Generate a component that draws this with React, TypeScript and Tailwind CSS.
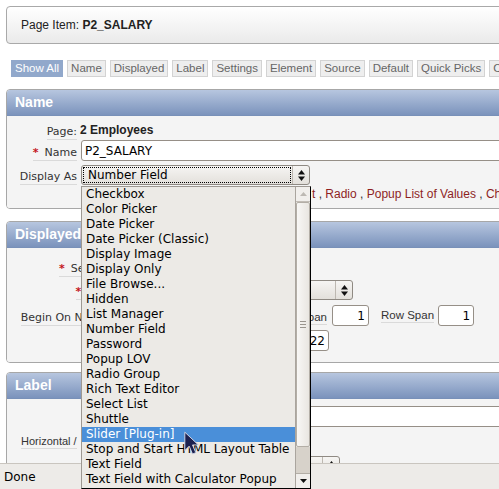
import React from "react";

const displayTypes = [
  "Checkbox",
  "Color Picker",
  "Date Picker",
  "Date Picker (Classic)",
  "Display Image",
  "Display Only",
  "File Browse...",
  "Hidden",
  "List Manager",
  "Number Field",
  "Password",
  "Popup LOV",
  "Radio Group",
  "Rich Text Editor",
  "Select List",
  "Shuttle",
  "Slider [Plug-in]",
  "Stop and Start HTML Layout Table",
  "Text Field",
  "Text Field with Calculator Popup",
];

const tabs = [
  "Show All",
  "Name",
  "Displayed",
  "Label",
  "Settings",
  "Element",
  "Source",
  "Default",
  "Quick Picks",
  "Conditions",
];

function FieldLabel({
  children,
  required,
}: {
  children: React.ReactNode;
  required?: boolean;
}) {
  return (
    <span className="inline-block whitespace-nowrap border-b border-[#dadada] pb-[1px] font-['DejaVu_Sans',sans-serif] text-[11px] leading-[13px] text-[#333]">
      {required && (
        <span className="mr-[6px] font-bold text-[#c4161c]">*</span>
      )}
      {children}
    </span>
  );
}

function UpDown() {
  return (
    <svg width="7" height="13" viewBox="0 0 7 13">
      <path d="M0 5.5 L3.5 1 L7 5.5 Z" fill="#111" />
      <path d="M0 7.5 L3.5 12 L7 7.5 Z" fill="#111" />
    </svg>
  );
}

function SelectBox({
  value,
  focused,
  className,
}: {
  value?: string;
  focused?: boolean;
  className: string;
}) {
  return (
    <div
      className={`flex h-[20px] items-stretch rounded-[3px] border border-[#8f8a83] bg-gradient-to-b from-[#f6f5f3] to-[#e3e0db] ${className}`}
    >
      <div
        className={`m-[1px] flex flex-1 items-center overflow-hidden whitespace-nowrap pl-[4px] font-['DejaVu_Sans',sans-serif] text-[12px] text-black ${
          focused ? "border border-dotted border-black" : ""
        }`}
      >
        {value}
      </div>
      <div className="flex w-[17px] items-center justify-center border-l border-[#bdb8b1]">
        <UpDown />
      </div>
    </div>
  );
}

function TextBox({
  value,
  className,
}: {
  value?: string;
  className: string;
}) {
  return (
    <div
      className={`flex h-[21px] items-center rounded-[3px] border border-[#968f87] bg-white px-[3px] font-['DejaVu_Sans',sans-serif] text-[12px] text-black ${className}`}
    >
      {value}
    </div>
  );
}

function Panel({
  title,
  children,
  className,
}: {
  title: string;
  children: React.ReactNode;
  className: string;
}) {
  return (
    <section
      className={`overflow-hidden rounded-[4px] border border-[#a7a7a7] ${className}`}
    >
      <h2 className="flex h-[26px] items-center border-b border-[#7890b8] bg-gradient-to-b from-[#b7c6df] to-[#7b93bc] pl-[8px] text-[14px] font-bold text-white">
        {title}
      </h2>
      {children}
    </section>
  );
}

function Scrollbar() {
  return (
    <div className="flex w-[15px] flex-col border-l border-[#aaa59e]">
      <div className="flex h-[15px] items-center justify-center border-b border-[#c2bdb6] bg-[#f1efec]">
        <svg width="7" height="4" viewBox="0 0 7 4">
          <path d="M0 4 L3.5 0 L7 4 Z" fill="#bdb9b3" />
        </svg>
      </div>
      <div className="flex h-[245px] items-center justify-center rounded-[2px] border border-[#b3aea6] bg-gradient-to-r from-[#f8f7f5] to-[#e9e6e1]">
        <div className="flex flex-col gap-[2px]">
          <div className="h-px w-[6px] bg-[#9a958e]" />
          <div className="h-px w-[6px] bg-[#9a958e]" />
          <div className="h-px w-[6px] bg-[#9a958e]" />
        </div>
      </div>
      <div className="flex-1 bg-[#d7d2ca]" />
      <div className="flex h-[15px] items-center justify-center border-t border-[#b3aea6] bg-[#f1efec]">
        <svg width="7" height="4" viewBox="0 0 7 4">
          <path d="M0 0 L3.5 4 L7 0 Z" fill="#111" />
        </svg>
      </div>
    </div>
  );
}

export default function App() {
  return (
    <div className="relative flex h-[489px] w-[499px] flex-col overflow-hidden bg-white font-['Liberation_Sans',Arial,sans-serif]">
      <div className="flex-1 overflow-hidden">
        <div className="w-[540px] pl-[6px] pt-[6px]">
          {/* page item heading */}
          <div className="flex h-[38px] items-center rounded-[4px] border border-[#a9a9a9] bg-gradient-to-b from-white to-[#eaeaea] pl-[14px] text-[12px] text-[#222]">
            Page Item:&nbsp;<b>P2_SALARY</b>
          </div>

          {/* tabs */}
          <div className="mt-[16px] flex gap-[4px] pl-[5px]">
            {tabs.map((t, i) => (
              <span
                key={t}
                className={
                  i === 0
                    ? "flex h-[17px] items-center whitespace-nowrap border border-[#91a8cb] bg-[#91a8cb] px-[3px] text-[11.5px] text-white"
                    : "flex h-[17px] items-center whitespace-nowrap border border-[#d3d3d3] bg-[#eeeeee] px-[3px] text-[11.5px] text-[#666]"
                }
              >
                {t}
              </span>
            ))}
          </div>

          {/* Name */}
          <Panel title="Name" className="mt-[12px]">
            <div className="flex h-[92px] flex-col bg-[#f4f4f4] pt-[6px]">
              <div className="flex h-[16px] items-center">
                <div className="w-[70px] text-right">
                  <FieldLabel>Page:</FieldLabel>
                </div>
                <span className="ml-[3px] text-[12px] font-bold text-[#222]">
                  2 Employees
                </span>
              </div>
              <div className="mt-[2px] flex h-[21px] items-center">
                <div className="w-[70px] text-right">
                  <FieldLabel required>Name</FieldLabel>
                </div>
                <TextBox value="P2_SALARY" className="ml-[4px] w-[430px] text-[11.5px]" />
              </div>
              <div className="mt-[4px] flex h-[20px] items-center">
                <div className="w-[70px] text-right">
                  <FieldLabel>Display As</FieldLabel>
                </div>
                <SelectBox value="Number Field" focused className="ml-[4px] w-[229px]" />
              </div>
              <div className="flex h-[17px] items-center whitespace-nowrap pl-[305px] text-[12px] text-[#333]">
                <span className="text-[#8e1f1f]">t</span>&nbsp;,&nbsp;
                <span className="text-[#8e1f1f]">Radio</span>&nbsp;,&nbsp;
                <span className="text-[#8e1f1f]">Popup List of Values</span>&nbsp;,&nbsp;
                <span className="text-[#8e1f1f]">Checkbox</span>
              </div>
            </div>
          </Panel>

          {/* Displayed */}
          <Panel title="Displayed" className="mt-[12px]">
            <div className="flex h-[114px] flex-col bg-[#f4f4f4] pt-[9px]">
              <div className="flex h-[20px] items-center">
                <div className="w-[118px] text-right">
                  <FieldLabel required>Sequence</FieldLabel>
                </div>
              </div>
              <div className="mt-[3px] flex h-[20px] items-center">
                <div className="w-[118px] text-right">
                  <FieldLabel required>Region</FieldLabel>
                </div>
                <SelectBox className="ml-[4px] w-[224px]" />
              </div>
              <div className="mt-[5px] flex h-[21px] items-center">
                <div className="w-[118px] text-right">
                  <FieldLabel>Begin On New Line</FieldLabel>
                </div>
                <div className="w-[202px] text-right">
                  <span className="inline-block border-b border-[#dadada] text-[11.5px] leading-[14px] text-[#333]">
                    pan
                  </span>
                </div>
                <TextBox value="1" className="ml-[5px] w-[37px] justify-end" />
                <span className="ml-[12px] inline-block border-b border-[#dadada] text-[11.5px] leading-[14px] text-[#333]">
                  Row Span
                </span>
                <TextBox value="1" className="ml-[4px] w-[36px] justify-end" />
              </div>
              <div className="mt-[4px] flex h-[21px] items-center">
                <div className="w-[118px]" />
                <TextBox value="22" className="ml-[164px] w-[40px] justify-end" />
              </div>
            </div>
          </Panel>

          {/* Label */}
          <Panel title="Label" className="mt-[9px]">
            <div className="flex h-[80px] flex-col bg-[#f4f4f4] pt-[7px]">
              <div className="flex h-[21px] items-center">
                <div className="w-[118px]" />
                <TextBox className="ml-[4px] w-[400px]" />
              </div>
              <div className="mt-[4px] flex h-[20px] items-center pl-[14px]">
                <span className="inline-block whitespace-nowrap border-b border-[#dadada] text-[11px] leading-[14px] text-[#333]">
                  Horizontal /
                </span>
              </div>
              <div className="mt-[5px] flex h-[20px] items-center">
                <div className="w-[118px]" />
                <SelectBox className="ml-[4px] w-[211px]" />
              </div>
            </div>
          </Panel>
        </div>
      </div>

      {/* browser status bar */}
      <div className="flex h-[26px] items-center border-t border-[#c9c5bf] bg-[#edebe8] pl-[4px] font-['DejaVu_Sans',sans-serif] text-[12px] text-black">
        Done
      </div>

      {/* open select popup */}
      <div className="absolute left-[81px] top-[186px] flex h-[303px] w-[230px] border-b border-l border-r border-t border-b-black border-l-[#9d9892] border-r-black border-t-[#9d9892] bg-[#eceae6]">
        <ul className="flex-1 font-['DejaVu_Sans',sans-serif] text-[12px]">
          {displayTypes.map((d) => (
            <li
              key={d}
              className={
                d === "Slider [Plug-in]"
                  ? "h-[15px] whitespace-nowrap bg-[#4a8fd9] pl-[4px] leading-[15px] text-white"
                  : "h-[15px] whitespace-nowrap pl-[4px] leading-[15px] text-black"
              }
            >
              {d}
            </li>
          ))}
        </ul>
        <Scrollbar />
      </div>

      {/* mouse pointer */}
      <svg
        className="absolute left-[183px] top-[431px]"
        width="19"
        height="26"
        viewBox="0 0 16 22"
      >
        <path
          d="M1.5 1 L1.5 16.5 L5.2 12.8 L8 19.5 L10.8 18.3 L8 11.8 L13 11.8 Z"
          fill="#1c2150"
          stroke="#d4d7e6"
          strokeWidth="0.8"
          strokeLinejoin="round"
        />
      </svg>
    </div>
  );
}
